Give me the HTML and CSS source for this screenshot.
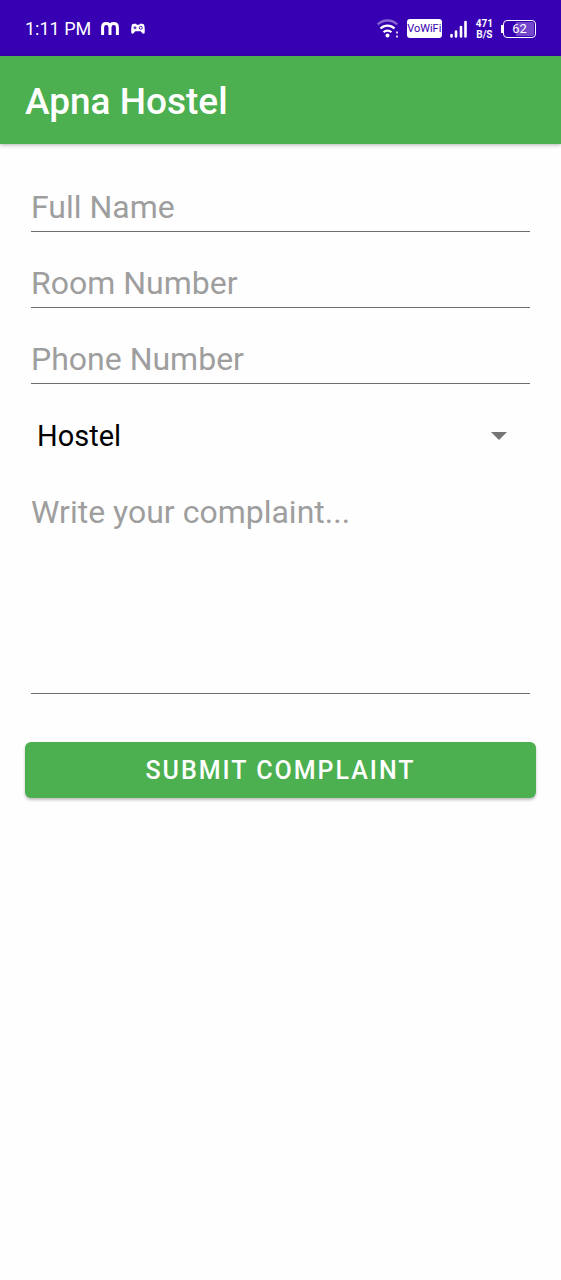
FILE: index.html
```html
<!DOCTYPE html>
<html lang="en">
<head>
<meta charset="utf-8">
<meta name="viewport" content="width=device-width, initial-scale=1">
<title>Apna Hostel</title>
<link rel="stylesheet" href="styles.css">
</head>
<body>
<div class="status-bar">
  <div class="status-group status-left">
    <span class="clock">1:11 PM</span>
    <svg class="icon-m" width="18" height="14" viewBox="0 0 18 14" aria-hidden="true">
      <path d="M1.600 13V5.400C1.600 2.800 3 1.600 5.200 1.600S9 2.900 9 5.400V13M9 5.400C9 2.900 10.600 1.600 12.800 1.600s3.600 1.200 3.600 3.800V13" fill="none" stroke="#fff" stroke-width="3"/>
    </svg>
    <svg class="icon-game" width="14" height="12" viewBox="0 0 14 12" aria-hidden="true">
      <path d="M3 .8h2l.8.9h2.400l.8-.9h2c1.500 0 2.300.7 2.500 2.700.2 1.800.4 4.400.2 6-.2 1.400-1.800 1.600-2.500.5L9.700 8.300H4.300L2.800 10c-.7 1.100-2.300.9-2.500-.5-.2-1.600 0-4.200.2-6C.7 1.500 1.500.8 3 .8Z" fill="#fff"/>
      <path d="M4 3.300v3M2.500 4.800h3" stroke="#3700b3" stroke-width="1"/>
      <circle cx="9.800" cy="4.800" r="1.500" fill="none" stroke="#3700b3" stroke-width=".9"/>
    </svg>
  </div>
  <div class="status-group">
    <svg class="icon-wifi" width="22" height="20" viewBox="0 0 22 20" aria-hidden="true">
      <g fill="none" stroke="#fff" stroke-width="2.300">
        <path d="M.7 5.500a14 14 0 0 1 19.600 0" opacity=".4"/>
        <path d="M3.500 9.500a10 10 0 0 1 14 0"/>
        <path d="M6.600 13.200a5.500 5.500 0 0 1 7.800 0"/>
      </g>
      <circle cx="10.500" cy="16.500" r="2" fill="#fff"/>
      <path d="M19 12.500h2v2h-2zM19 16.500h2v2h-2z" fill="#fff" opacity=".8"/>
    </svg>
    <span class="vowifi">VoWiFi</span>
    <svg class="icon-signal" width="18" height="18" viewBox="0 0 18 18" aria-hidden="true">
      <path d="M1.500 15v1.500M6 11.500v5M11 7V16.500M15.500 2v14.500" stroke="#fff" stroke-width="2.600" stroke-linecap="round"/>
    </svg>
    <span class="speed"><span>471</span><span>B/S</span></span>
    <span class="battery"><span class="battery-body"><span class="battery-fill">62</span></span></span>
  </div>
</div>
<header class="app-bar"><h1>Apna Hostel</h1></header>
<main>
  <form class="form">
    <input class="field" type="text" placeholder="Full Name" aria-label="Full Name">
    <input class="field" type="text" placeholder="Room Number" aria-label="Room Number">
    <input class="field" type="tel" placeholder="Phone Number" aria-label="Phone Number">
    <div class="select-wrap">
      <select class="select" aria-label="Complaint type"><option>Hostel</option></select>
      <svg class="caret" width="16" height="8" viewBox="0 0 16 8" aria-hidden="true"><path d="M0 0h16L8 8Z" fill="#757575"/></svg>
    </div>
    <textarea class="field message" placeholder="Write your complaint..." aria-label="Write your complaint"></textarea>
    <button class="submit" type="button">SUBMIT COMPLAINT</button>
  </form>
</main>
</body>
</html>
```
FILE: styles.css
```css
* {
  box-sizing: border-box;
}

body {
  margin: 0;
  background: #fefefe;
  color: #000;
  font-family: Roboto, "Noto Sans", sans-serif;
}

.status-bar {
  display: flex;
  align-items: center;
  justify-content: space-between;
  height: 56px;
  padding: 1px 25px 0;
  background: #3700b3;
  color: #fff;
}

.status-group {
  display: flex;
  align-items: center;
  gap: 8px;
}

.status-left {
  gap: 10px;
}

.clock {
  font-size: 18px;
  line-height: 24px;
}

.icon-game {
  margin-left: 2px;
}

.vowifi {
  width: 35px;
  border-radius: 3px;
  background: #fff;
  color: #3700b3;
  font-size: 11px;
  font-weight: 400;
  line-height: 19px;
  text-align: center;
}

.speed {
  display: flex;
  flex-direction: column;
  font-size: 10px;
  font-weight: 700;
  line-height: 11px;
  text-align: center;
}

.battery {
  display: flex;
  align-items: center;
}

.battery::before {
  content: "";
  width: 2px;
  height: 8px;
  background: #fff;
}

.battery-body {
  width: 33px;
  padding: 1px;
  border: 1px solid #fff;
  border-radius: 4px;
}

.battery-fill {
  display: block;
  border-radius: 2px;
  background: linear-gradient(to left, #7347cc 62%, transparent 62%);
  font-size: 13px;
  line-height: 14px;
  text-align: center;
}

.app-bar {
  display: flex;
  align-items: center;
  height: 88px;
  padding: 4px 25px 0;
  background: #4caf50;
  color: #fff;
  box-shadow: 0 1px 4px rgba(0, 0, 0, 0.3);
}

.app-bar h1 {
  margin: 0;
  font-size: 37px;
  font-weight: 500;
  line-height: 44px;
}

.form {
  display: flex;
  flex-direction: column;
  gap: 24px;
  padding: 36px 25px;
}

.field {
  margin: 0 6px;
  height: 52px;
  padding: 2px 0 0;
  border: 0;
  border-bottom: 1px solid #6e6e6e;
  border-radius: 0;
  background: transparent;
  color: #000;
  font: 32px/40px Roboto, "Noto Sans", sans-serif;
  outline: 0;
}

.field::placeholder {
  color: #9e9e9e;
  opacity: 1;
}

.select-wrap {
  display: grid;
  align-items: center;
}

.select,
.caret {
  grid-area: 1 / 1;
}

.select {
  width: 100%;
  height: 56px;
  padding: 0 12px;
  border: 0;
  background: transparent;
  color: #000;
  appearance: none;
  font: 29px/40px Roboto, "Noto Sans", sans-serif;
}

.caret {
  justify-self: end;
  margin-right: 29px;
  pointer-events: none;
}

.message {
  height: 206px;
  padding-top: 4px;
  resize: none;
}

.submit {
  height: 56px;
  margin-top: 24px;
  padding-top: 3px;
  border: 0;
  border-radius: 6px;
  background: #4caf50;
  color: #fff;
  box-shadow: 0 2px 3px rgba(0, 0, 0, 0.25);
  font: 500 25px/32px Roboto, "Noto Sans", sans-serif;
  letter-spacing: 2px;
}
```
